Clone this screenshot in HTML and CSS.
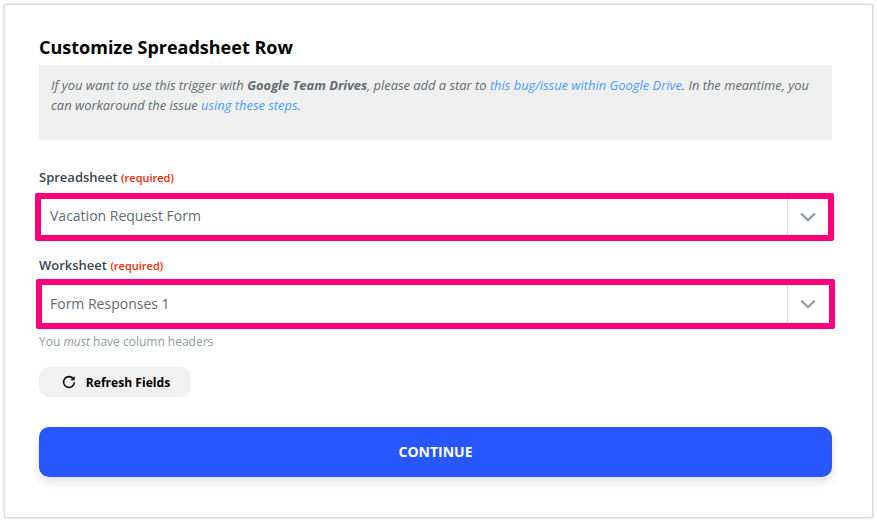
FILE: index.html
```html
<!DOCTYPE html>
<html lang="en">
<head>
<meta charset="utf-8">
<title>Customize Spreadsheet Row</title>
<link rel="stylesheet" href="styles.css">
</head>
<body>
<main class="card">
  <h1 class="title">Customize Spreadsheet Row</h1>
  <p class="note">If you want to use this trigger with <b>Google Team Drives</b>, please add a star to <a href="#">this bug/issue within Google Drive</a>. In the meantime, you can workaround the issue <a href="#">using these steps</a>.</p>
  <div class="label label-first">Spreadsheet <span class="req">(required)</span></div>
  <div class="select select-a">
    <span class="value">Vacation Request Form</span>
    <span class="arrow"><svg width="16" height="10" viewBox="0 0 16 10"><path d="M1.2 1.6 8 8l6.8-6.4" fill="none" stroke="#96a0a8" stroke-width="2.4"/></svg></span>
  </div>
  <div class="label label-second">Worksheet <span class="req">(required)</span></div>
  <div class="select select-b">
    <span class="value">Form Responses 1</span>
    <span class="arrow"><svg width="16" height="10" viewBox="0 0 16 10"><path d="M1.2 1.6 8 8l6.8-6.4" fill="none" stroke="#96a0a8" stroke-width="2.4"/></svg></span>
  </div>
  <div class="hint">You <i>must</i> have column headers</div>
  <button class="refresh" type="button">
    <svg width="14" height="14" viewBox="0 0 14 14"><path d="M11.6 4.2A5.4 5.4 0 1 0 12.4 7.4" fill="none" stroke="#111" stroke-width="1.6"/><path d="M12.7.9v4.4H8.3z" fill="#111"/></svg>
    <span>Refresh Fields</span>
  </button>
  <button class="continue" type="button">CONTINUE</button>
</main>
</body>
</html>
```
FILE: styles.css
```css
* { box-sizing: border-box; }
html, body { margin: 0; height: 100%; }
body {
  width: 877px;
  height: 522px;
  padding: 5px;
  background: #fff;
  font-family: "Open Sans", sans-serif;
  overflow: hidden;
}
.card {
  width: 867px;
  height: 512px;
  padding: 30px 40px 0 34px;
  background: #fff;
  box-shadow: 0 0 2px 1px rgba(0, 0, 0, 0.22);
}
.title {
  margin: 0;
  height: 30px;
  font-size: 18px;
  line-height: 24px;
  font-weight: 700;
  color: #000;
}
.note {
  margin: 0;
  height: 75px;
  padding: 10px 12px 0 12px;
  background: #efefef;
  font-size: 12.9px;
  line-height: 20px;
  font-style: italic;
  color: #5f6c72;
}
.note a { color: #4a9dff; text-decoration: none; }
.note b { font-weight: 700; }
.label {
  font-size: 13px;
  line-height: 18px;
  font-weight: 600;
  color: #37474f;
}
.label-first { margin-top: 28px; height: 25px; }
.label-second { margin-top: 15px; height: 23px; }
.req { font-size: 11px; font-weight: 600; color: #f52a00; }
.select {
  display: flex;
  align-items: stretch;
  background: #fff;
  border: 6px solid #ff007a;
  border-radius: 2px;
  font-size: 14px;
  color: #5f6c72;
}
.select-a { width: 799px; height: 48px; margin-left: -4px; }
.select-b { width: 799px; height: 50px; margin-left: -3px; }
.value { flex: 1; display: flex; align-items: center; padding: 0 0 3px 9px; }
.select-b .value { padding: 0 0 2px 8px; }
.arrow {
  width: 41px;
  display: flex;
  align-items: center;
  justify-content: center;
  border-left: 1px solid #d9d9d9;
}
.select-b .arrow { width: 42px; padding-right: 1px; }
.hint {
  margin-top: 4px;
  height: 18px;
  font-size: 12px;
  line-height: 18px;
  color: #8f9a9f;
}
.refresh {
  display: flex;
  align-items: center;
  justify-content: center;
  gap: 10px;
  width: 152px;
  height: 30px;
  margin-top: 16px;
  padding: 0 0 0 2px;
  border: 0;
  border-radius: 10px;
  background: #f1f1f1;
  font-family: inherit;
  font-size: 12.1px;
  font-weight: 700;
  color: #000;
}
.continue {
  display: block;
  width: 793px;
  height: 50px;
  margin-top: 30px;
  padding: 0 0 2px;
  border: 0;
  border-radius: 10px;
  background: #2857ff;
  box-shadow: 0 5px 10px rgba(0, 0, 0, 0.12);
  font-family: inherit;
  font-size: 14px;
  font-weight: 700;
  color: #fff;
}
```
